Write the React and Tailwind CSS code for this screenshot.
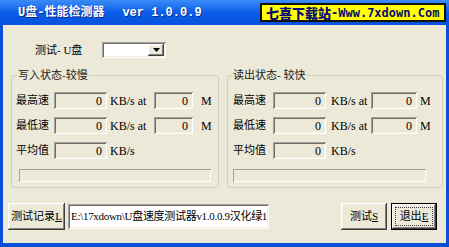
import React from "react";

const sunken =
  "shadow-[inset_1px_1px_0_#a0a0a0,inset_-1px_-1px_0_#ffffff,inset_2px_2px_0_#716f64,inset_-2px_-2px_0_#f1efe2]";
const raised =
  "shadow-[inset_-1px_-1px_0_#404040,inset_1px_1px_0_#ffffff,inset_-2px_-2px_0_#808080,inset_2px_2px_0_#f4f2e8]";

function Field({ w }) {
  return (
    <div className={`h-[17px] ${w} ${sunken} flex items-center justify-end pr-[5px] text-[12px] leading-none`}>
      0
    </div>
  );
}

function Group({ title, width, cols, legendLeft }) {
  const [labelW, in1, kbGap, kbW, in2, mGap, barMl, barW, padL] = cols;
  const rows = [
    ["最高速", true],
    ["最低速", true],
    ["平均值", false],
  ];
  return (
    <div className={`relative ${width} h-[113px] border border-[#d0d0bf] rounded-[3px] pt-[16px] ${padL}`}>
      <div className={`absolute top-[-9px] ${legendLeft} bg-[#ece9d8] px-[1px] text-[11px] leading-[16px] text-[#202020]`}>
        {title}
      </div>
      <div className="flex flex-col gap-[8px]">
        {rows.map(([label, full]) => (
          <div key={label} className="flex items-center h-[17px]">
            <div className={`${labelW} text-[11px] leading-none`}>{label}</div>
            <Field w={in1} />
            <div className={`${kbGap} ${kbW} text-[12px] leading-none whitespace-pre`}>
              {full ? "KB/s at" : "KB/s"}
            </div>
            {full && (
              <>
                <Field w={in2} />
                <div className={`${mGap} text-[12px] leading-none`}>M</div>
              </>
            )}
          </div>
        ))}
      </div>
      <div className={`mt-[10px] ${barMl} ${barW} h-[13px] shadow-[inset_1px_1px_0_#a0a0a0,inset_-1px_-1px_0_#ffffff]`} />
    </div>
  );
}

function Btn({ children, focus, w }) {
  if (focus) {
    return (
      <div className={`${w} h-[27px] border border-black`}>
        <div className={`w-full h-full ${raised} flex items-center justify-center p-[3px]`}>
          <div className="w-full h-full border border-dotted border-[#404040] flex items-center justify-center text-[11px] leading-none">
            {children}
          </div>
        </div>
      </div>
    );
  }
  return (
    <div className={`${w} h-[27px] ${raised} flex items-center justify-center text-[11px] leading-none`}>
      {children}
    </div>
  );
}

export default function App() {
  return (
    <div className="w-[449px] h-[247px] flex flex-col overflow-hidden font-['Liberation_Serif','Noto_Sans_CJK_SC',serif] text-black">
      <div className="h-[25px] flex items-center justify-between pl-[18px] pr-[3px] bg-gradient-to-b from-[#3b8cf7] via-[#0a5ce8] to-[#0652de]">
        <div className="text-white font-bold text-[12px] leading-none font-['Liberation_Mono','Noto_Sans_CJK_SC',monospace] [text-shadow:1px_1px_0_#0a2a8a]">
          U盘-性能检测器<span className="ml-[18px]">ver 1.0.0.9</span>
        </div>
        <div className="w-[186px] h-[19px] bg-[#ffff00] border-2 border-[#111111] flex items-center pl-[4px] text-[#0a0a78] font-bold leading-none font-['DejaVu_Sans_Mono','Noto_Sans_CJK_SC',monospace]">
          <span className="text-[13px] font-['Noto_Sans_CJK_SC',sans-serif] font-black">七喜下载站</span>
          <span className="text-[12px]">-Www.7xdown.Com</span>
        </div>
      </div>
      <div className="flex-1 bg-[#ece9d8] border-x-[3px] border-b-[4px] border-[#0a4fd8] flex flex-col">
        <div className="mt-[17px] h-[16px] flex items-center">
          <div className="ml-[32px] w-[67px] text-[11px] leading-none">测试- U盘</div>
          <div className={`w-[64px] h-[16px] bg-white ${sunken} flex items-center justify-end pr-[2px]`}>
            <div className={`w-[16px] h-[12px] bg-[#ece9d8] ${raised} flex items-center justify-center`}>
              <svg width="7" height="4" viewBox="0 0 7 4">
                <path d="M0 0h7L3.5 4z" fill="#000" />
              </svg>
            </div>
          </div>
        </div>
        <div className="mt-[17px] ml-[8px] flex gap-[8px]">
          <Group
            title="写入状态-较慢"
            width="w-[208px]"
            legendLeft="left-[5px]"
            cols={["w-[38px]", "w-[53px]", "ml-[3px]", "w-[44px]", "w-[39px]", "ml-[8px]", "ml-[3px]", "w-[192px]", "pl-[4px]"]}
          />
          <Group
            title="读出状态- 较快"
            width="w-[216px]"
            legendLeft="left-[4px]"
            cols={["w-[40px]", "w-[53px]", "ml-[5px]", "w-[40px]", "w-[46px]", "ml-[3px]", "ml-[0px]", "w-[193px]", "pl-[5px]"]}
          />
        </div>
        <div className="mt-[15px] ml-[5px] mr-[9px] flex items-center">
          <Btn w="w-[57px]">
            <span>测试记录<span className="underline">L</span></span>
          </Btn>
          <div className={`ml-[3px] w-[201px] h-[25px] bg-white ${sunken} flex items-center pl-[3px] overflow-hidden whitespace-nowrap text-[11px] leading-none tracking-[-0.3px]`}>
            {"E:\\17xdown\\U盘速度测试器v1.0.0.9汉化绿1"}
          </div>
          <div className="flex-1" />
          <Btn w="w-[46px]">
            <span>测试<span className="underline">S</span></span>
          </Btn>
          <div className="w-[4px]" />
          <Btn w="w-[46px]" focus>
            <span>退出<span className="underline">E</span></span>
          </Btn>
        </div>
      </div>
    </div>
  );
}
